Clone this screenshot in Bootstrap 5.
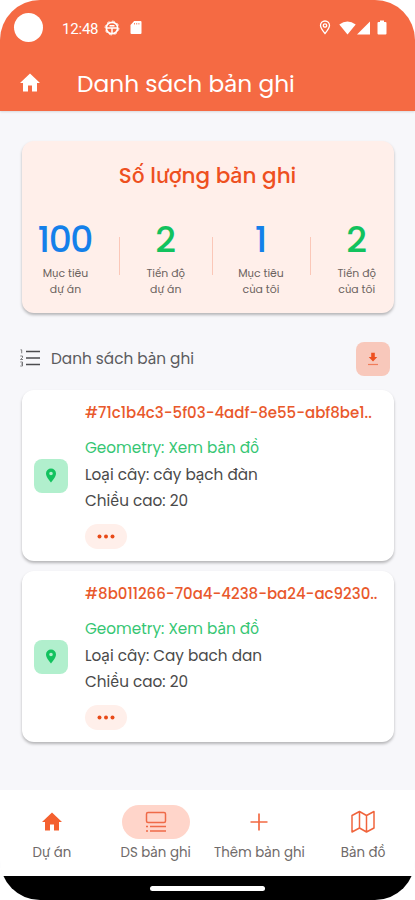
<!DOCTYPE html>
<html lang="vi">
<head>
<meta charset="utf-8">
<meta name="viewport" content="width=device-width, initial-scale=1">
<title>Danh sách bản ghi</title>
<link href="https://cdn.jsdelivr.net/npm/bootstrap@5.3.0/dist/css/bootstrap.min.css" rel="stylesheet">
<style>
  body { background: #fff; font-family: Poppins, Inter, "Open Sans", sans-serif; }
  svg { display: block; flex: none; }
  .phone { width: 415px; height: 900px; border-radius: 40px; background: #f7f7fa; }
  .topbar { height: 111px; background: #f56a43; box-shadow: 0 1px 2px rgba(0,0,0,.12); }
  .statusbar { height: 55px; padding-left: 14px; padding-right: 28px; }
  .camera { width: 29px; height: 29px; background: #fff; }
  .clock { font: 400 15px/20px Roboto, sans-serif; margin-left: 19px; padding-top: 2px; width: 38px; letter-spacing: -.2px; }
  .titlebar { height: 56px; padding-left: 18px; }
  .page-title { font-size: 23.3px; line-height: 30px; margin-left: 35px; padding-top: 2px; }
  .content-area { padding: 30px 21px 0 22px; }
  .panel { border: 0; border-radius: 12px; box-shadow: 0 2px 3px rgba(0,0,0,.27); }
  .summary { height: 172px; background: #ffefea; }
  .summary-title { font-size: 21.5px; line-height: 28px; font-weight: 500; color: #ee501f; margin-top: 21px; padding-right: 1px; }
  .stats { margin-top: 26px; }
  .stat-num { font-size: 36px; line-height: 48px; font-weight: 500; letter-spacing: -1.5px; padding-right: 1.5px; }
  .stat-label { font-size: 10.9px; line-height: 16px; color: #6c6360; margin-top: 2px; }
  .blue { color: #1480ea; } .green { color: #12c25e; }
  .rule { width: 1px; height: 38px; background: #fbc7b8; margin-top: 21px; }
  .cell-a { width: 97px; padding-right: 10px; }
  .cell-b { width: 91.5px; }
  .cell-c { width: 97px; }
  .cell-d { flex: 1; padding-left: 9px; }
  .list-head { height: 34px; margin-top: 29px; padding-right: 4px; margin-left: -2px; }
  .list-title { font-size: 15.3px; line-height: 20px; color: #5b5b5e; margin-left: 10px; }
  .tile { width: 34px; height: 34px; border-radius: 8px; }
  .tile-orange { background: #f8c8bb; } .tile-green { background: #b1efcd; }
  .record { height: 171px; padding-left: 12px; }
  .record-body { margin-left: 17px; height: 171px; padding-top: 10px; }
  .record-id { font-size: 15px; line-height: 26px; font-weight: 500; color: #e9592c; white-space: nowrap; }
  .record-line { font-size: 15.25px; line-height: 26.5px; color: #4a4a4a; white-space: nowrap; }
  .record-line.geo { color: #35c673; margin-top: 9px; }
  .more { width: 42px; height: 25px; background: #ffefea; margin-top: 9px; }
  .bottom-nav { height: 86px; padding-top: 15px; background: #fff; }
  .bottom-item { width: 103.75px; }
  .pill { width: 68px; height: 34px; }
  .pill.on { background: #ffd5ca; }
  .bottom-label { font-size: 13.35px; line-height: 18px; margin-top: 5px; color: #6f6a69; white-space: nowrap; }
  .gesture { height: 24px; background: #000; }
  .gesture-bar { width: 115px; height: 5px; background: #fff; border-radius: 3px; }
</style>
<script src="https://cdn.jsdelivr.net/npm/bootstrap@5.3.0/dist/js/bootstrap.bundle.min.js"></script>
</head>
<body>
<div class="phone overflow-hidden d-flex flex-column">
  <header class="topbar text-white flex-shrink-0">
    <div class="statusbar d-flex align-items-center">
      <div class="camera rounded-circle"></div>
      <div class="clock">12:48</div>
      <svg class="ms-1" width="16" height="16" viewBox="0 0 16 16" fill="none" stroke="#fff"><circle cx="8" cy="8" r="5.700" stroke-width="1.700"/><circle cx="8" cy="8" r="6.900" stroke-width=".9" stroke-dasharray="2.700 2.700"/><path d="M2.500 8H13.500M8 8V13.500M5.500 5.800H10.500" stroke-width="1.500"/></svg>
      <svg style="margin-left:10px" width="12" height="15" viewBox="0 0 12 15"><path d="M4.200 1H10.500Q11.500 1 11.500 2V13Q11.500 14 10.500 14H1.500Q.5 14 .5 13V5Z" fill="#fff"/><path d="M4.500 3v1.500M6.700 3v1.500M8.900 3v1.500" stroke="#f56a43" stroke-width=".8"/></svg>
      <svg class="ms-auto" width="12" height="15" viewBox="0 0 12 15" fill="none" stroke="#fff" stroke-width="1.300"><path d="M6 13.500C3.500 10.500 1.500 8 1.500 5.500a4.500 4.500 0 0 1 9 0C10.500 8 8.500 10.500 6 13.500Z"/><circle cx="6" cy="5.500" r="1.700"/></svg>
      <svg style="margin-left:8px" width="17" height="14" viewBox="0 0 17 14"><path d="M.3 3.500Q8.500-2.500 16.700 3.500L8.500 13.500Z" fill="#fff"/></svg>
      <svg width="15" height="14" viewBox="0 0 15 14"><path d="M14 .5V13.500H1Z" fill="#fff"/></svg>
      <svg style="margin-left:6px" width="10" height="15" viewBox="0 0 10 15"><path d="M3 .5H7V2H8.500Q9.500 2 9.500 3V13.500Q9.500 14.500 8.500 14.500H1.500Q.5 14.500 .5 13.500V3Q.5 2 1.500 2H3Z" fill="#fff"/></svg>
    </div>
    <div class="titlebar d-flex align-items-center">
      <svg width="24" height="24" viewBox="0 0 24 24"><path d="M10 20.500v-6h4v6h5v-8.500h3L12 2.500 2 12h3v8.500z" fill="#fff"/></svg>
      <h1 class="page-title fw-normal mb-0">Danh sách bản ghi</h1>
    </div>
  </header>

  <main class="content-area flex-grow-1">
    <section class="card panel summary">
      <h2 class="summary-title text-center mb-0">Số lượng bản ghi</h2>
      <div class="stats d-flex text-center">
        <div class="cell-a"><div class="stat-num blue">100</div><div class="stat-label">Mục tiêu<br>dự án</div></div>
        <div class="rule"></div>
        <div class="cell-b"><div class="stat-num green">2</div><div class="stat-label">Tiến độ<br>dự án</div></div>
        <div class="rule"></div>
        <div class="cell-c"><div class="stat-num blue">1</div><div class="stat-label">Mục tiêu<br>của tôi</div></div>
        <div class="rule"></div>
        <div class="cell-d"><div class="stat-num green">2</div><div class="stat-label">Tiến độ<br>của tôi</div></div>
      </div>
    </section>

    <div class="list-head d-flex align-items-center">
      <svg width="21" height="20" viewBox="0 0 21 20" fill="none" stroke="#4c4c4f"><path d="M6 2.500H20M6 9H20M6 15.500H20" stroke-width="1.600"/><path d="M.5 .8H1.700V4.300M.3 7H2.500V8.500L.5 10.500H3M.3 13H2.500V17H.3M1 15H2.500" stroke-width=".7"/></svg>
      <h2 class="list-title fw-normal mb-0">Danh sách bản ghi</h2>
      <div class="tile tile-orange ms-auto d-flex align-items-center justify-content-center">
        <svg width="12" height="14" viewBox="0 0 12 14"><path d="M4.200 .8H7.800V5H10.300L6 9.500 1.700 5H4.200Z" fill="#ee501f"/><path d="M1 12.500H11" stroke="#f07d5b" stroke-width="1.200"/></svg>
      </div>
    </div>

    <article class="card panel record flex-row align-items-center" style="margin-top:14px">
      <div class="tile tile-green d-flex align-items-center justify-content-center">
        <svg width="12" height="15" viewBox="0 0 12 15"><path fill-rule="evenodd" d="M6 .5a5 5 0 0 0-5 5C1 9 6 14.500 6 14.500S11 9 11 5.500a5 5 0 0 0-5-5Zm0 3.200a1.800 1.800 0 1 1 0 3.600 1.800 1.800 0 0 1 0-3.600Z" fill="#12c25e"/></svg>
      </div>
      <div class="record-body">
        <div class="record-id">#71c1b4c3-5f03-4adf-8e55-abf8be1..</div>
        <div class="record-line geo">Geometry: Xem bản đồ</div>
        <div class="record-line">Loại cây: cây bạch đàn</div>
        <div class="record-line">Chiều cao: 20</div>
        <div class="more rounded-pill d-flex align-items-center justify-content-center"><svg width="18" height="5" viewBox="0 0 18 5" fill="#e84a18"><circle cx="2.500" cy="2.500" r="2"/><circle cx="9" cy="2.500" r="2"/><circle cx="15.500" cy="2.500" r="2"/></svg></div>
      </div>
    </article>

    <article class="card panel record flex-row align-items-center" style="margin-top:10px">
      <div class="tile tile-green d-flex align-items-center justify-content-center">
        <svg width="12" height="15" viewBox="0 0 12 15"><path fill-rule="evenodd" d="M6 .5a5 5 0 0 0-5 5C1 9 6 14.500 6 14.500S11 9 11 5.500a5 5 0 0 0-5-5Zm0 3.200a1.800 1.800 0 1 1 0 3.600 1.800 1.800 0 0 1 0-3.600Z" fill="#12c25e"/></svg>
      </div>
      <div class="record-body">
        <div class="record-id">#8b011266-70a4-4238-ba24-ac9230..</div>
        <div class="record-line geo">Geometry: Xem bản đồ</div>
        <div class="record-line">Loại cây: Cay bach dan</div>
        <div class="record-line">Chiều cao: 20</div>
        <div class="more rounded-pill d-flex align-items-center justify-content-center"><svg width="18" height="5" viewBox="0 0 18 5" fill="#e84a18"><circle cx="2.500" cy="2.500" r="2"/><circle cx="9" cy="2.500" r="2"/><circle cx="15.500" cy="2.500" r="2"/></svg></div>
      </div>
    </article>
  </main>

  <nav class="bottom-nav d-flex flex-shrink-0">
    <div class="bottom-item d-flex flex-column align-items-center">
      <div class="pill rounded-pill d-flex align-items-center justify-content-center"><svg width="24" height="24" viewBox="0 0 24 24"><path d="M10 20.500v-6h4v6h5v-8.500h3L12 2.500 2 12h3v8.500z" fill="#f4602f"/></svg></div>
      <div class="bottom-label">Dự án</div>
    </div>
    <div class="bottom-item d-flex flex-column align-items-center">
      <div class="pill on rounded-pill d-flex align-items-center justify-content-center"><svg width="22" height="22" viewBox="0 0 22 22" fill="none" stroke="#ef6a48"><rect x="1.500" y="1.500" width="19" height="10" rx="1.500" stroke-width="1.500"/><path d="M1 15.500H3M5 15.500H21M1 20H3M5 20H21" stroke-width="1.300"/></svg></div>
      <div class="bottom-label">DS bản ghi</div>
    </div>
    <div class="bottom-item d-flex flex-column align-items-center">
      <div class="pill rounded-pill d-flex align-items-center justify-content-center"><svg width="18" height="18" viewBox="0 0 18 18" stroke="#f26a43" stroke-width="1.700"><path d="M9 .5V17.500M.5 9H17.500"/></svg></div>
      <div class="bottom-label">Thêm bản ghi</div>
    </div>
    <div class="bottom-item d-flex flex-column align-items-center">
      <div class="pill rounded-pill d-flex align-items-center justify-content-center"><svg width="24" height="24" viewBox="0 0 24 24" fill="none" stroke="#f0643c" stroke-width="1.500" stroke-linejoin="round"><path d="M1 5.500 8.500 1.500 15.500 5.500 23 1.500V18L15.500 22 8.500 18 1 22ZM8.500 1.500V18M15.500 5.500V22"/></svg></div>
      <div class="bottom-label">Bản đồ</div>
    </div>
  </nav>
  <div class="gesture flex-shrink-0 d-flex align-items-center justify-content-center"><div class="gesture-bar"></div></div>
</div>
</body>
</html>
